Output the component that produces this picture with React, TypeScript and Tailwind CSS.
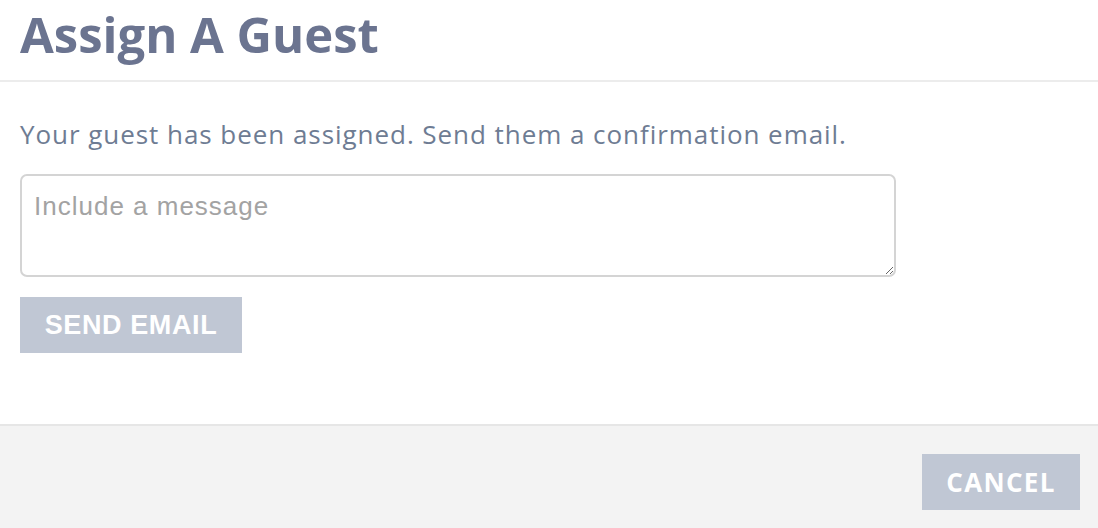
export default function App() {
  return (
    <div className="w-[1098px] h-[528px] bg-white flex flex-col" style={{ fontFamily: '"Open Sans", sans-serif' }}>
      <div className="h-[82px] border-b-2 border-[#ececec] px-[20px] pt-[2px]">
        <h1 className="text-[49px] font-bold text-[#6b7490] leading-[64px]">Assign A Guest</h1>
      </div>
      <div className="flex-1 px-[20px] pt-[33px]">
        <p className="text-[26px] text-[#6e7c93] leading-[38px] tracking-[0.95px]">
          Your guest has been assigned. Send them a confirmation email.
        </p>
        <textarea
          className="mt-[21px] block w-[876px] h-[103px] border-2 border-[#d4d4d4] rounded-[7px] px-[12px] pt-[15px] text-[26px] tracking-[1px] text-[#555] placeholder:text-[#a3a3a3] outline-none resize-y"
          style={{ fontFamily: '"Liberation Sans", Arial, sans-serif', lineHeight: '1.2' }}
          placeholder="Include a message"
        />
        <button
          className="mt-[20px] w-[222px] h-[56px] bg-[#c0c7d4] text-white font-bold text-[27px] tracking-[0.6px] uppercase"
          style={{ fontFamily: '"Liberation Sans", Arial, sans-serif' }}
        >
          Send Email
        </button>
      </div>
      <div className="h-[104px] border-t-2 border-[#e6e6e6] bg-[#f3f3f3] flex justify-end items-start pt-[28px] pr-[18px]">
        <button className="w-[158px] h-[56px] bg-[#c0c7d4] text-white font-bold text-[26px] tracking-[1.3px] uppercase">
          Cancel
        </button>
      </div>
    </div>
  );
}
